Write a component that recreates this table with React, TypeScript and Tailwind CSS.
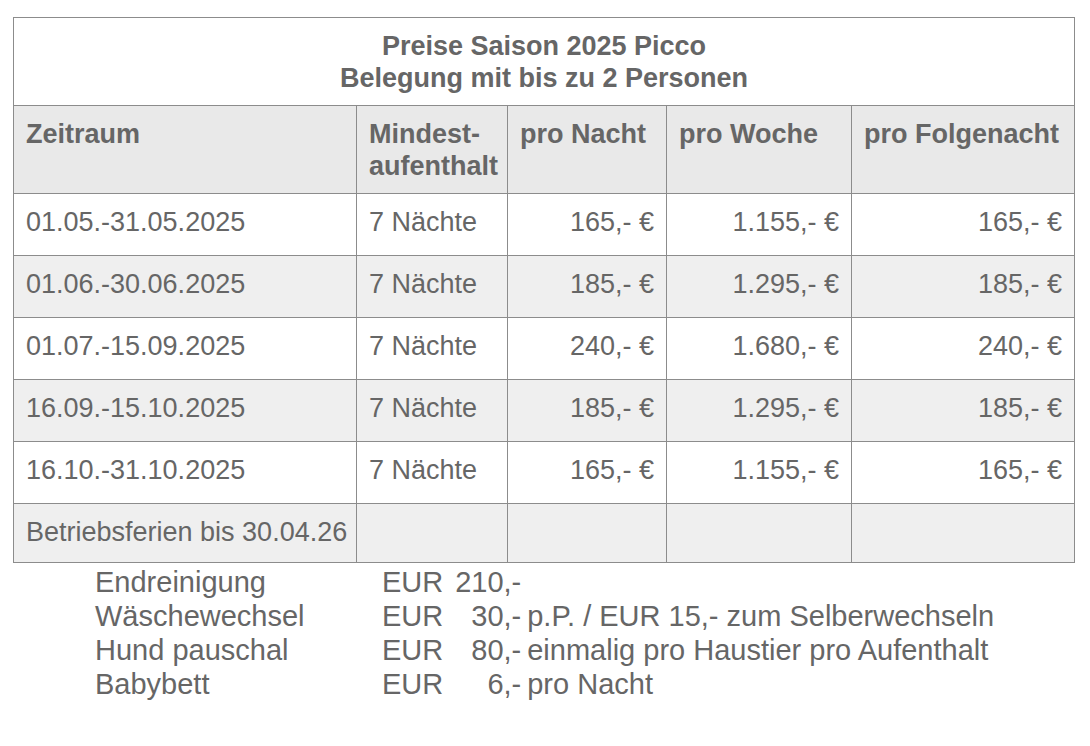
const rows = [
  { range: '01.05.-31.05.2025', night: '165,- €', week: '1.155,- €', next: '165,- €' },
  { range: '01.06.-30.06.2025', night: '185,- €', week: '1.295,- €', next: '185,- €' },
  { range: '01.07.-15.09.2025', night: '240,- €', week: '1.680,- €', next: '240,- €' },
  { range: '16.09.-15.10.2025', night: '185,- €', week: '1.295,- €', next: '185,- €' },
  { range: '16.10.-31.10.2025', night: '165,- €', week: '1.155,- €', next: '165,- €' },
];

const extras = [
  { label: 'Endreinigung', amount: '210,-', note: '' },
  { label: 'Wäschewechsel', amount: '30,-', note: 'p.P. / EUR 15,- zum Selberwechseln' },
  { label: 'Hund pauschal', amount: '80,-', note: 'einmalig pro Haustier pro Aufenthalt' },
  { label: 'Babybett', amount: '6,-', note: 'pro Nacht' },
];

const cell = 'border border-[#8c8c8c] px-[12px]';

export default function App() {
  return (
    <div className="min-h-screen bg-white pl-[13px] pt-[17px] font-['Liberation_Sans',Arial,sans-serif] text-[#666666]">
      <table className="w-[1061px] table-fixed border-collapse text-[27px] leading-[32px]">
        <colgroup>
          <col className="w-[343px]" />
          <col className="w-[151px]" />
          <col className="w-[159px]" />
          <col className="w-[185px]" />
          <col className="w-[223px]" />
        </colgroup>
        <tbody>
          <tr className="h-[88px] bg-white">
            <td colSpan={5} className={`${cell} text-center font-bold`}>
              Preise Saison 2025 Picco
              <br />
              Belegung mit bis zu 2 Personen
            </td>
          </tr>
          <tr className="h-[88px] bg-[#e9e9e9] font-bold">
            <td className={`${cell} pt-[12px] align-top`}>Zeitraum</td>
            <td className={`${cell} pt-[12px] align-top`}>
              Mindest-
              <br />
              aufenthalt
            </td>
            <td className={`${cell} pt-[12px] align-top`}>pro Nacht</td>
            <td className={`${cell} pt-[12px] align-top`}>pro Woche</td>
            <td className={`${cell} pt-[12px] align-top`}>pro Folgenacht</td>
          </tr>
          {rows.map((r, i) => (
            <tr key={r.range} className={`h-[62px] ${i % 2 === 1 ? 'bg-[#efefef]' : 'bg-white'}`}>
              <td className={`${cell} pb-[5px]`}>{r.range}</td>
              <td className={`${cell} pb-[5px]`}>7 Nächte</td>
              <td className={`${cell} pb-[5px] text-right`}>{r.night}</td>
              <td className={`${cell} pb-[5px] text-right`}>{r.week}</td>
              <td className={`${cell} pb-[5px] text-right`}>{r.next}</td>
            </tr>
          ))}
          <tr className="h-[59px] bg-[#efefef]">
            <td className={`${cell} whitespace-nowrap pr-0 pb-[2px]`}>Betriebsferien bis 30.04.26</td>
            <td className={cell}></td>
            <td className={cell}></td>
            <td className={cell}></td>
            <td className={cell}></td>
          </tr>
        </tbody>
      </table>

      {/* Zusatzkosten */}
      <div className="mt-[2px] grid grid-cols-[287px_auto_78px_auto] justify-start pl-[82px] text-[29px] leading-[34px]">
        {extras.map((e) => (
          <div key={e.label} className="contents">
            <span>{e.label}</span>
            <span>EUR</span>
            <span className="text-right">{e.amount}</span>
            <span className="pl-[6px]">{e.note}</span>
          </div>
        ))}
      </div>
    </div>
  );
}
